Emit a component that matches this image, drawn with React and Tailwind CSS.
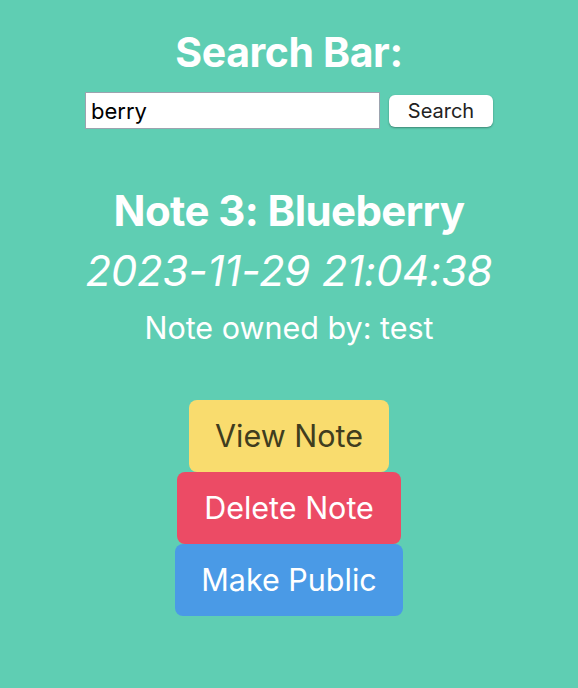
import React, { useState } from 'react';

export default function App() {
  const [query, setQuery] = useState('berry');

  return (
    <div className="min-h-[688px] w-full bg-[#5fceb3] font-['Inter',sans-serif] text-white flex flex-col items-center">
      {/* Search */}
      <h1 className="mt-[27px] text-[41px] leading-[50px] font-bold tracking-[-0.4px]">Search Bar:</h1>
      <div className="mt-[15px] flex items-center gap-[9px]">
        <input
          type="text"
          value={query}
          onChange={(e) => setQuery(e.target.value)}
          className="w-[295px] h-[37px] bg-white border border-[#9ca3af] px-[5px] text-[22px] text-black outline-none"
        />
        <button className="w-[104px] h-[32px] bg-white rounded-[6px] shadow-[0_1px_2px_rgba(0,0,0,0.35)] text-[20px] text-[#222] leading-none">
          Search
        </button>
      </div>

      {/* Note */}
      <h2 className="mt-[57px] text-[42px] leading-[50px] font-bold tracking-[-0.6px]">Note 3: Blueberry</h2>
      <p className="mt-[10px] text-[42px] leading-[50px] italic tracking-[-0.2px]">2023-11-29 21:04:38</p>
      <p className="mt-[14px] text-[30.5px] leading-[36px]">Note owned by: test</p>

      {/* Actions */}
      <div className="mt-[54px] flex flex-col items-center">
        <button className="w-[200px] h-[72px] bg-[#f9dc6e] rounded-[8px] text-[30.5px] text-[#403d1e]">View Note</button>
        <button className="w-[224px] h-[72px] bg-[#ec4b65] rounded-[8px] text-[30.5px] text-white">Delete Note</button>
        <button className="w-[228px] h-[72px] bg-[#4a9ae6] rounded-[8px] text-[30.5px] text-white">Make Public</button>
      </div>
    </div>
  );
}
